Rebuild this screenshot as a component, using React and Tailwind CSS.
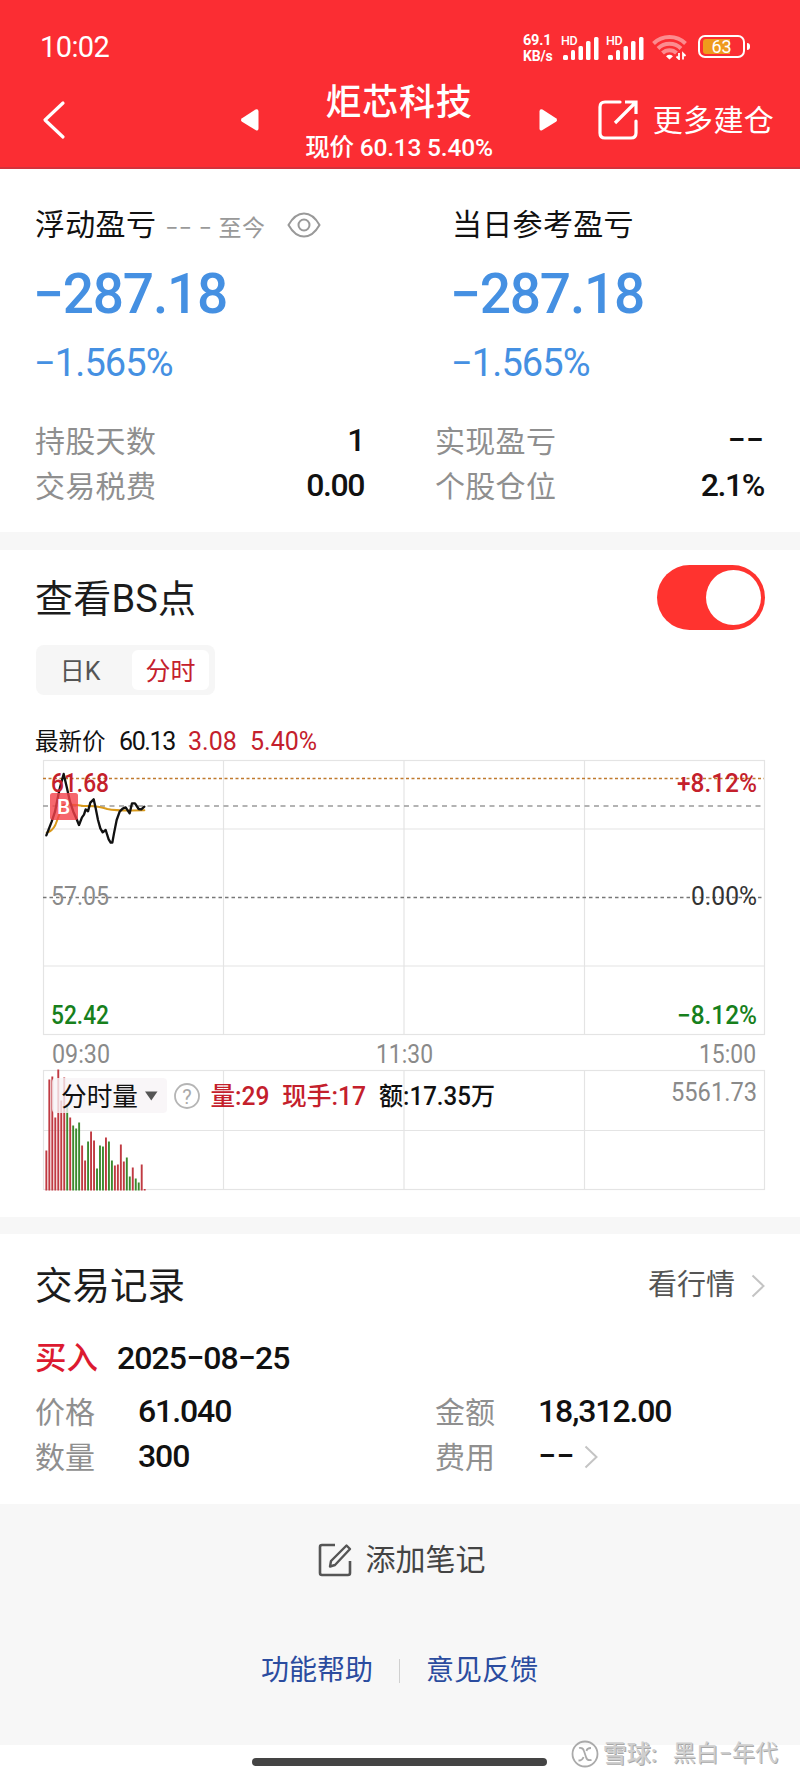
import { useState } from "react";

const RED = "#c4202c";
const GREEN = "#17801c";

// [height, isUp]
const volumes = [
  [40, 1], [111, 1], [114, 1], [73, 1], [121, 1], [90, 1], [113, 1], [86, 0], [73, 1],
  [65, 0], [62, 0], [68, 0], [45, 1], [30, 1], [49, 0], [59, 1], [50, 1], [22, 0],
  [45, 0], [44, 0], [53, 1], [49, 0], [30, 0], [25, 1], [26, 1], [46, 1], [29, 1],
  [33, 0], [14, 0], [23, 1], [12, 0], [8, 0], [26, 1], [1.5, 1],
];

const Chevron = ({ className = "" }) => (
  <svg className={`w-[14px] h-6 ${className}`} viewBox="0 0 14 24" fill="none" stroke="#c4c4c4" strokeWidth="2">
    <path d="M1.5 1.5L12.5 12L1.5 22.5" />
  </svg>
);

const Signal = () => (
  <div className="flex">
    <span className="w-[18px] text-[12.500px] leading-[11px] tracking-[-0.3px] font-medium mt-[-1px]">HD</span>
    <svg className="w-9 h-6 -ml-[16px]" viewBox="0 0 36 24" fill="#fff">
      <rect x="0" y="19" width="5" height="5" rx="1.5" />
      <rect x="8" y="14" width="4" height="10" rx="1.5" />
      <rect x="15.500" y="10" width="4.500" height="14" rx="1.5" />
      <rect x="23" y="5" width="4.500" height="19" rx="1.5" />
      <rect x="31" y="1" width="4.500" height="23" rx="1.5" />
    </svg>
  </div>
);

const StatusBar = () => (
  <div className="h-[72px] pt-[34px] pl-10 pr-[50px] flex justify-between">
    <span className="text-[29px] leading-[26px] tracking-[-0.6px]">10:02</span>
    <div className="flex items-start">
      <div className="w-[33px] mr-[5px] text-[14.500px] leading-[14.500px] font-bold whitespace-nowrap">
        <div className="tracking-[-0.2px]">69.1</div>
        <div className="text-[14px] tracking-[-0.2px]">KB/s</div>
      </div>
      <div className="flex gap-[7px] pt-[2px]">
        <Signal />
        <Signal />
      </div>
      <svg className="w-9 h-[27px] ml-[8px] mt-[-1px]" viewBox="0 0 36 27" fill="none" stroke="#fff" strokeWidth="4">
        <g opacity=".45">
          <path d="M1.500 10.500a23 23 0 0 1 32 0" />
          <path d="M6 15.500a16.500 16.500 0 0 1 23 0" />
          <path d="M10.500 20a10 10 0 0 1 14 0" />
        </g>
        <path d="M14 23.200Q17.500 20.500 21 23.200L17.500 26.500z" fill="#fff" stroke="none" />
        <path d="M27 20v6l-2.500-2.500M31 26.500v-6l2.500 2.500" strokeWidth="1.800" />
      </svg>
      <div className="ml-[10px] mt-[1px] flex items-center">
        <div className="relative w-[47px] h-[23px] rounded-[7px] border-2 border-white">
          <div className="absolute left-[3px] top-[2px] w-[27px] h-[15px] rounded-l-[3px] bg-[#ef9a1c]" />
          <span className="absolute inset-0 text-center text-[18px] leading-[20px]">63</span>
        </div>
        <div className="w-[3px] h-[7px] ml-[2px] rounded-r bg-white" />
      </div>
    </div>
  </div>
);

const Header = () => (
  <header className="h-[169px] bg-[#fb2d33] border-b-2 border-[#d3323b] text-white">
    <StatusBar />
    <div className="h-[95px] pl-[42px] pr-[26px] flex">
      <svg className="w-6 h-10 mt-7" viewBox="0 0 24 40" fill="none" stroke="#fff" strokeWidth="3.200" strokeLinecap="round" strokeLinejoin="round">
        <path d="M21 3L3 20L21 37" />
      </svg>
      <div className="flex ml-[174px]">
        <svg className="w-5 h-6 mt-[36px]" viewBox="0 0 20 24" fill="#fff">
          <path d="M2 10.200L15.500 1.500Q18.500 0.500 18.500 3.500V20.500Q18.500 23.500 15.500 22L2 13.800Q0 12 2 10.200z" />
        </svg>
        <div className="w-[278px] text-center">
          <h1 className="mt-[10px] text-[36px] leading-[42px] font-medium tracking-[0.8px]">炬芯科技</h1>
          <p className="mt-[9px] text-[24.500px] leading-[30px] font-medium tracking-[-0.2px] whitespace-nowrap">现价 60.13 5.40%</p>
        </div>
        <svg className="w-5 h-6 mt-[36px]" viewBox="0 0 20 24" fill="#fff">
          <path d="M18 10.200L4.500 1.500Q1.500 0.500 1.500 3.500V20.500Q1.500 23.500 4.500 22L18 13.800Q20 12 18 10.200z" />
        </svg>
      </div>
      <button className="ml-auto flex items-start">
        <svg className="w-10 h-10 mt-[28px] mr-[15px]" viewBox="0 0 40 40" fill="none" stroke="#fff" strokeWidth="3.200">
          <path d="M22 2H7Q2 2 2 7V33Q2 38 7 38H33Q38 38 38 33V21" strokeLinecap="round" />
          <path d="M17 23L37 3M27 2H38V14" />
        </svg>
        <span className="mt-[31px] text-[30px] leading-[36px] tracking-[0.3px]">更多建仓</span>
      </button>
    </div>
  </header>
);

const Stat = ({ label, value, wide }) => (
  <div className="flex justify-between h-[45px] leading-[45px]">
    <span className="text-[30px] tracking-[0.3px] text-[#8f8f8f]">{label}</span>
    <span className={`-mt-px text-[32px] font-medium ${wide ? "tracking-[0.3px]" : "tracking-[-1.400px]"}`}>{value}</span>
  </div>
);

const Profit = ({ children }) => (
  <div className="w-[417px]">
    <div className="h-10 flex items-center text-[30px] leading-10 tracking-[0.3px] whitespace-nowrap">{children}</div>
    <div className="mt-[21px] -ml-[2px] text-[55px] leading-[56px] font-medium tracking-[-1.200px] text-[#4590e2]">−287.18</div>
    <div className="mt-[17px] mb-px -ml-px text-[38px] leading-[48px] tracking-[-0.9px] text-[#4590e2]">−1.565%</div>
  </div>
);

const Summary = () => (
  <section className="h-[363px] pl-[35px] pr-[35px] pt-[36px]">
    <div className="flex w-[834px]">
      <Profit>
        浮动盈亏
        <span className="ml-[9px] mt-[7px] text-[23px] tracking-[0.500px] text-[#999]">−− − 至今</span>
        <svg className="w-[34px] h-[26px] ml-[21px] -mt-px" viewBox="0 0 34 26" fill="none" stroke="#999" strokeWidth="2">
          <path d="M1.500 13Q8 1.500 17 1.500T32.500 13Q26 24.500 17 24.500T1.500 13z" />
          <circle cx="17" cy="13" r="5.500" />
        </svg>
      </Profit>
      <Profit>当日参考盈亏</Profit>
    </div>
    <div className="mt-[31px] flex gap-[71px]">
      <div className="w-[329px]">
        <Stat label="持股天数" value="1" />
        <Stat label="交易税费" value="0.00" />
      </div>
      <div className="w-[329px]">
        <Stat label="实现盈亏" value="−−" wide />
        <Stat label="个股仓位" value="2.1%" />
      </div>
    </div>
  </section>
);

const Chart = () => (
  <svg className="block w-[800px] h-[440px]" viewBox="0 0 800 440" fontSize="25" fontFamily='Roboto, "Noto Sans CJK SC", sans-serif'>
    {/* grid */}
    <g fill="none" stroke="#e4e4e4" strokeWidth="1.200">
      <rect x="43.500" y="4.500" width="721" height="274" />
      <path d="M43.500 73H764.500M43.500 210H764.500M223.500 4.500V278.500M404 4.500V278.500M584.500 4.500V278.500" />
      <rect x="43.500" y="314.500" width="721" height="119" />
      <path d="M43.500 374.500H764.500M223.500 314.500V433.500M404 314.500V433.500M584.500 314.500V433.500" />
    </g>
    <path d="M43 22.500H764" stroke="#c07a2e" strokeWidth="1.400" strokeDasharray="3 2.500" />
    <path d="M43 50H764" stroke="#9a9a9a" strokeWidth="1.400" strokeDasharray="5 4.500" />
    <path d="M43 141.500H764" stroke="#777" strokeWidth="1.400" strokeDasharray="3.500 3" />

    {/* average line + price line */}
    <g transform="translate(20 -16) scale(.33333)" fill="none" strokeLinejoin="round" strokeLinecap="round">
      <path d="M80 278Q98 272 106 255Q118 222 130 195Q160 192 190 198Q232 196 262 207Q290 213 373 211" stroke="#d99a1c" strokeWidth="6" />
      <path d="M79 286L95 245L105 215L118 150L131 102L140 140L150 185L160 215L170 238L177 255L186 232L192 224L197 208L204 214L211 188L221 178L227 205L234 240L241 265L248 277L257 270L266 298L272 308L277 308L282 280L290 240L299 215L308 206L317 202L329 220L336 190L345 190L356 207L364 208L373 200" stroke="#111" strokeWidth="7" />
    </g>
    <rect x="50" y="37" width="28" height="27" rx="2.500" fill="#f4414a" fillOpacity=".8" />
    <text x="57" y="58" fontSize="21" fontWeight="500" fill="#fff" textLength="13">B</text>

    <g fontWeight="500">
      <g fill={RED}>
        <text x="51" y="35.500" textLength="58" lengthAdjust="spacingAndGlyphs">61.68</text>
        <text x="677" y="35.500" textLength="80" lengthAdjust="spacingAndGlyphs">+8.12%</text>
      </g>
      <text x="51" y="148.500" fill="#8a8a8a" fontWeight="400" textLength="58" lengthAdjust="spacingAndGlyphs">57.05</text>
      <text x="691" y="148.500" fill="#333" fontWeight="400" textLength="66" lengthAdjust="spacingAndGlyphs">0.00%</text>
      <g fill={GREEN}>
        <text x="51" y="267.500" textLength="58" lengthAdjust="spacingAndGlyphs">52.42</text>
        <text x="677" y="267.500" textLength="80" lengthAdjust="spacingAndGlyphs">−8.12%</text>
      </g>
    </g>
    <g fill="#8a8a8a">
      <text x="52" y="307" textLength="58" lengthAdjust="spacingAndGlyphs">09:30</text>
      <text x="376" y="307" textLength="57" lengthAdjust="spacingAndGlyphs">11:30</text>
      <text x="699" y="307" textLength="57" lengthAdjust="spacingAndGlyphs">15:00</text>
      <text x="671" y="345" textLength="86" lengthAdjust="spacingAndGlyphs">5561.73</text>
    </g>

    {/* volume */}
    {volumes.map(([h, up], i) => (
      <rect key={i} x={45.4 + i * 2.98} y={434.5 - h} width="1.900" height={h} fill={up ? "#c03a42" : "#3c8a2e"} />
    ))}
    <rect x="52" y="322" width="115" height="35" rx="4" fill="#f7f4f6" fillOpacity=".8" />
    <text x="61" y="349.500" fill="#111" fontSize="26" textLength="77" lengthAdjust="spacingAndGlyphs">分时量</text>
    <path d="M145 335.500H157.500L151.300 344.500z" fill="#555" />
    <circle cx="187" cy="340" r="12" fill="none" stroke="#b5b5b5" strokeWidth="1.800" />
    <text x="187" y="347.500" textAnchor="middle" fontSize="20" fill="#aaa">?</text>
    <g fontWeight="500">
      <text x="210.500" y="349" fill={RED} textLength="59" lengthAdjust="spacingAndGlyphs">量:29</text>
      <text x="282" y="349" fill={RED} textLength="84" lengthAdjust="spacingAndGlyphs">现手:17</text>
      <text x="379" y="349" fill="#111" textLength="116" lengthAdjust="spacingAndGlyphs">额:17.35万</text>
    </g>
  </svg>
);

const BsSection = () => {
  const [on, setOn] = useState(true);

  return (
    <section className="h-[667px]">
      <div className="pt-[15px] pl-[35px] pr-[35px] flex justify-between">
        <h2 className="mt-[11px] text-[38px] leading-[46px] tracking-[0.2px] text-[#1c1c1c]">查看BS点</h2>
        <button
          type="button"
          onClick={() => setOn(!on)}
          className={`w-[108px] h-[65px] p-[5px] pr-1 rounded-full flex ${on ? "bg-[#ff332f] justify-end" : "bg-gray-300"}`}
        >
          <span className="w-[55px] h-[55px] rounded-full bg-white" />
        </button>
      </div>
      <div className="mt-[15px] ml-9 w-[179px] h-[50px] p-[5px] rounded-lg bg-[#f6f6f6] flex text-[25px] leading-[43px] text-center">
        <span className="w-[91px] pr-[13px] text-[#555]">日K</span>
        <span className="w-[77px] rounded-md bg-white text-[#c4202c]">分时</span>
      </div>
      <div className="mt-[31px] -mb-[2px] ml-[35px] h-8 flex text-[23.500px] leading-8 whitespace-nowrap">
        <span className="w-[84px]">最新价</span>
        <span className="w-[69px] text-[25px] tracking-[-1.400px]">60.13</span>
        <span className="w-[62px] text-[25px] text-[#c4202c]">3.08</span>
        <span className="text-[25px] text-[#c4202c]">5.40%</span>
      </div>
      <Chart />
    </section>
  );
};

const Field = ({ label, value, more }) => (
  <div className="w-1/2 h-[45px] leading-[45px] flex items-center">
    <span className="w-[103px] pt-px text-[30px] text-[#8f8f8f]">{label}</span>
    <span className={`text-[32px] font-medium ${more ? "tracking-[0.3px]" : "tracking-[-1.100px]"}`}>{value}</span>
    {more && <Chevron className="ml-[9px]" />}
  </div>
);

const Records = () => (
  <section className="h-[270px] pl-[35px]">
    <div className="pt-[27px] pr-[35px] flex items-center justify-between">
      <h2 className="text-[37.500px] leading-[50px] text-[#1c1c1c]">交易记录</h2>
      <button className="flex items-center text-[29px] text-[#555]">
        看行情
        <Chevron className="ml-[16px] -mt-px" />
      </button>
    </div>
    <div className="mt-[24px] h-[46px] leading-[46px] flex items-center">
      <span className="w-[82px] pt-px text-[31.500px] font-medium text-[#dc1a30]">买入</span>
      <span className="text-[32px] tracking-[-0.9px] font-medium">2025−08−25</span>
    </div>
    <div className="mt-[8px] flex flex-wrap w-[800px]">
      <Field label="价格" value="61.040" />
      <Field label="金额" value="18,312.00" />
      <Field label="数量" value="300" />
      <Field label="费用" value="−−" more />
    </div>
  </section>
);

const Footer = () => (
  <footer className="h-[241px] bg-[#f7f7f7]">
    <button className="w-full pt-[34px] pl-[3px] flex items-center justify-center">
      <svg className="w-[34px] h-[34px] mr-[14px]" viewBox="0 0 34 34" fill="none" stroke="#555" strokeWidth="2.600" strokeLinejoin="round">
        <path d="M17 2H4Q2 2 2 4V30Q2 32 4 32H30Q32 32 32 30V18" />
        <path d="M28.500 2.500L32 6L17 22L12 23.500L13 18z" strokeWidth="2.400" />
      </svg>
      <span className="text-[30px] leading-[44px] text-[#444]">添加笔记</span>
    </button>
    <div className="mt-[67px] h-[44px] pr-px flex items-center justify-center text-[28px] text-[#2b4c9f]">
      <a>功能帮助</a>
      <span className="w-px h-6 mx-[26px] bg-[#d0d0d0]" />
      <a>意见反馈</a>
    </div>
  </footer>
);

const BottomBar = () => (
  <div className="relative h-[33px] bg-white pt-[13px]">
    <div className="w-[295px] h-[8px] ml-[252px] rounded-full bg-[#444]" />
    <div className="absolute right-[22px] top-[-6px] h-[30px] flex items-center text-[23px] leading-[30px] text-[#cfcfcf] whitespace-nowrap [text-shadow:1px_1px_0_#a8a8a8]">
      <svg className="w-7 h-7 mr-[4px]" viewBox="0 0 28 28" fill="none" stroke="#aaa" strokeWidth="1.800">
        <circle cx="14" cy="14" r="12.500" />
        <path d="M8 8Q12 7 13 11L15 17Q16 21 20.500 20M20 8Q16 8 15.500 11M12.500 17Q11.500 20.500 7.500 20.500" />
      </svg>
      <span className="w-[70px] text-[24px] font-medium">雪球:</span>
      <span>黑白−年代</span>
    </div>
  </div>
);

export default function App() {
  return (
    <div className="w-[800px] h-[1778px] overflow-hidden bg-white text-[#111] font-[Roboto,'Noto_Sans_CJK_SC',sans-serif]">
      <Header />
      <Summary />
      <div className="h-[18px] bg-[#f7f7f7]" />
      <BsSection />
      <div className="h-[17px] bg-[#f7f7f7]" />
      <Records />
      <Footer />
      <BottomBar />
    </div>
  );
}
